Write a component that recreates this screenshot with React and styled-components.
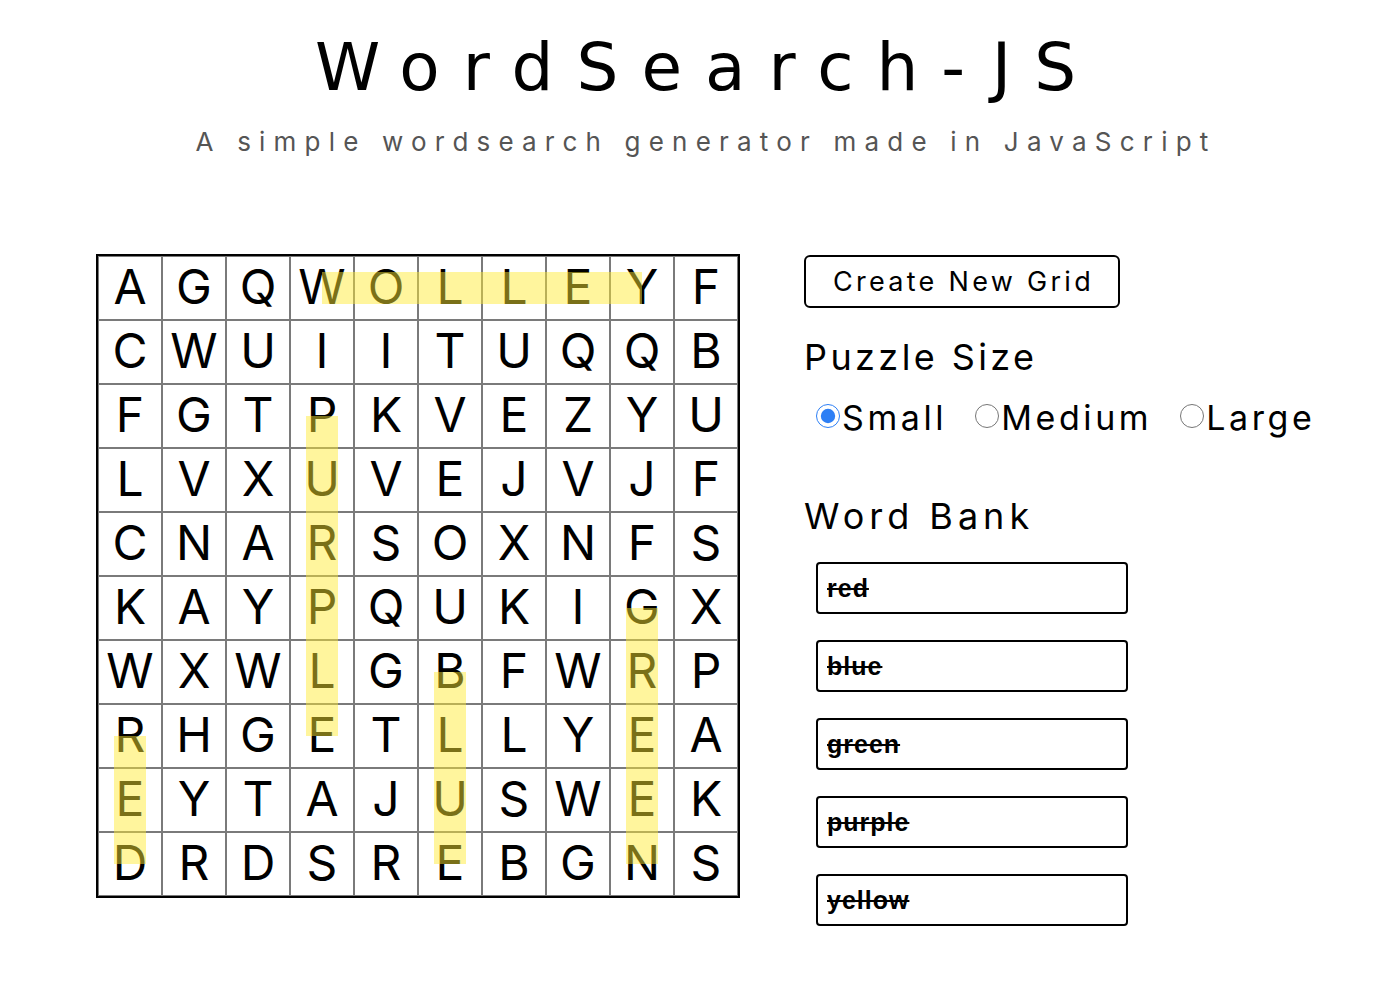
import styled, { createGlobalStyle } from 'styled-components'

const GlobalStyle = createGlobalStyle`
    body {
        margin: 0;
        background: #fff;
        font-family: Inter, "Noto Sans", sans-serif;
        color: #000;
    }
`

const letters = [
    'AGQWOLLEYF',
    'CWUIITUQQB',
    'FGTPKVEZYU',
    'LVXUVEJVJF',
    'CNARSOXNFS',
    'KAYPQUKIGX',
    'WXWLGBFWRP',
    'RHGETLLYEA',
    'EYTAJUSWEK',
    'DRDSREBGNS',
]

// found words: start/end cells as [row, col]
const found = [
    { word: 'yellow', from: [0, 3], to: [0, 8] },
    { word: 'purple', from: [2, 3], to: [7, 3] },
    { word: 'red', from: [7, 0], to: [9, 0] },
    { word: 'blue', from: [6, 5], to: [9, 5] },
    { word: 'green', from: [5, 8], to: [9, 8] },
]

const CELL = 64
const THICK = 32

const highlightBox = ({ from, to }) => {
    const x1 = Math.min(from[1], to[1]) * CELL + CELL / 2
    const x2 = Math.max(from[1], to[1]) * CELL + CELL / 2
    const y1 = Math.min(from[0], to[0]) * CELL + CELL / 2
    const y2 = Math.max(from[0], to[0]) * CELL + CELL / 2
    const horizontal = from[0] === to[0]
    return horizontal
        ? { left: x1, top: y1 - THICK / 2, width: x2 - x1, height: THICK }
        : { left: x1 - THICK / 2, top: y1, width: THICK, height: y2 - y1 }
}

const Page = styled.div`
    width: 1400px;
    height: 996px;
    overflow: hidden;
`

const Header = styled.header`
    text-align: center;
    padding-top: 28px;
`

const Title = styled.h1`
    margin: 0;
    font-family: "DejaVu Sans", sans-serif;
    font-weight: 400;
    font-size: 66px;
    line-height: 80px;
    letter-spacing: 23px;
    padding-left: 14px;
`

const Subtitle = styled.p`
    margin: 18px 0 0;
    font-size: 26px;
    line-height: 32px;
    letter-spacing: 8.2px;
    color: #555;
    padding-left: 12px;
`

const Main = styled.main`
    display: flex;
    align-items: flex-start;
    gap: 64px;
    padding-left: 96px;
    margin-top: 96px;
`

const Board = styled.div`
    position: relative;
    border: 2px solid #000;
    display: grid;
    grid-template-columns: repeat(10, ${CELL}px);
    grid-template-rows: repeat(10, ${CELL}px);
`

const Cell = styled.div`
    box-sizing: border-box;
    border: 1px solid #7a7a7a;
    display: flex;
    align-items: center;
    justify-content: center;
    padding-bottom: 3px;
    font-size: 48px;
    font-weight: 400;
    line-height: 1;
`

const Highlight = styled.div`
    position: absolute;
    background: rgba(255, 234, 50, 0.48);
    pointer-events: none;
`

const Panel = styled.section`
    display: flex;
    flex-direction: column;
    padding-top: 1px;
`

const Button = styled.button`
    width: 316px;
    height: 53px;
    box-sizing: border-box;
    border: 2px solid #000;
    border-radius: 6px;
    background: #fff;
    font-family: Inter, "Noto Sans", sans-serif;
    font-size: 27px;
    letter-spacing: 3.3px;
    color: #000;
    padding: 0 0 0 3px;
`

const Heading = styled.h2`
    margin: 0;
    font-weight: 400;
    font-size: 36px;
    line-height: 44px;
    letter-spacing: ${p => p.$spacing || 3.4}px;
`

const SizeHeading = styled(Heading)`
    margin-top: 27px;
`

const BankHeading = styled(Heading)`
    margin-top: 54px;
`

const Options = styled.div`
    display: flex;
    gap: 28px;
    margin-top: 17px;
    padding-left: 12px;
`

const Option = styled.label`
    display: flex;
    align-items: center;
    font-size: 34px;
    letter-spacing: 3.6px;
    line-height: 44px;
`

const Radio = styled.input`
    width: 24px;
    height: 24px;
    margin: 0 2px 4px 0;
    accent-color: #2d7ff5;
`

const Words = styled.div`
    display: flex;
    flex-direction: column;
    gap: 26px;
    margin-top: 24px;
    padding-left: 12px;
`

const WordInput = styled.input`
    width: 312px;
    height: 52px;
    box-sizing: border-box;
    border: 2px solid #000;
    border-radius: 4px;
    padding: 0 9px;
    font-family: "Liberation Sans", Arial, sans-serif;
    font-weight: 700;
    font-size: 25px;
    letter-spacing: 1px;
    text-decoration: line-through;
    color: #000;
    outline: none;
`

export default function App() {
    return (
        <Page>
            <GlobalStyle />
            <Header>
                <Title>WordSearch-JS</Title>
                <Subtitle>A simple wordsearch generator made in JavaScript</Subtitle>
            </Header>
            <Main>
                <Board>
                    {letters.map((row, r) =>
                        row.split('').map((ch, c) => <Cell key={r + '-' + c}>{ch}</Cell>)
                    )}
                    {found.map(f => <Highlight key={f.word} style={highlightBox(f)} />)}
                </Board>
                <Panel>
                    <Button>Create New Grid</Button>
                    <SizeHeading>Puzzle Size</SizeHeading>
                    <Options>
                        <Option><Radio type="radio" name="size" defaultChecked />Small</Option>
                        <Option><Radio type="radio" name="size" />Medium</Option>
                        <Option><Radio type="radio" name="size" />Large</Option>
                    </Options>
                    <BankHeading $spacing={5}>Word Bank</BankHeading>
                    <Words>
                        {['red', 'blue', 'green', 'purple', 'yellow'].map(w =>
                            <WordInput key={w} defaultValue={w} readOnly />
                        )}
                    </Words>
                </Panel>
            </Main>
        </Page>
    )
}
